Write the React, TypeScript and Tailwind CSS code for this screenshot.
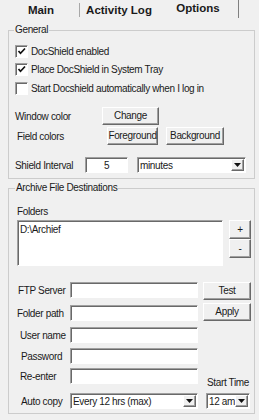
import React from 'react';

const raised =
  'bg-[#f0f0f0] border border-t-white border-l-white border-r-[#696969] border-b-[#696969] shadow-[inset_-1px_-1px_0_#a0a0a0]';
const sunken =
  'bg-white border border-t-[#a0a0a0] border-l-[#a0a0a0] border-r-white border-b-white shadow-[inset_1px_1px_0_#696969]';

function Btn({ children, className = '' }: { children: React.ReactNode; className?: string }) {
  return <button className={`${raised} flex items-center justify-center leading-none ${className}`}>{children}</button>;
}

function Check({ checked }: { checked?: boolean }) {
  return (
    <span className={`${sunken} w-[13px] h-[13px] flex items-center justify-center shrink-0`}>
      {checked && (
        <svg width="9" height="9" viewBox="0 0 9 9">
          <path d="M1.5 4 L3.5 6.3 L8 1.5" stroke="#111" strokeWidth="1.7" fill="none" />
        </svg>
      )}
    </span>
  );
}

function Combo({ value, className = '' }: { value: string; className?: string }) {
  return (
    <div className={`${sunken} flex items-center justify-between pl-[2px] pr-[1px] ${className}`}>
      <span>{value}</span>
      <span className={`${raised} w-[13px] h-[12px] flex items-center justify-center shrink-0`}>
        <svg width="7" height="4" viewBox="0 0 7 4">
          <path d="M0 0 H7 L3.5 4 Z" fill="#111" />
        </svg>
      </span>
    </div>
  );
}

function Field({ className = '' }: { className?: string }) {
  return <div className={`${sunken} w-[128px] h-[16px] shrink-0 ${className}`} />;
}

export default function App() {
  return (
    <div className="w-[259px] h-[420px] overflow-hidden whitespace-nowrap bg-[#f0f0f0] text-[#1a1a1a] text-[10px] leading-[13px] tracking-[-0.35px] font-['Liberation_Sans',Arial,sans-serif]">
      {/* Tabs */}
      <div className="flex h-[20px] font-bold text-[11.5px] tracking-normal">
        <div className="w-[79px] flex justify-center pt-[4px] pl-[3px]">Main</div>
        <div className="w-px h-[14px] mt-[3px] bg-[#a8a8a8]" />
        <div className="w-[78px] flex justify-center pt-[4px]">Activity Log</div>
        <div className="w-[80px] flex justify-center pt-[2px]">Options</div>
        <div className="w-px h-[18px] bg-[#808080]" />
      </div>

      {/* General */}
      <fieldset className="ml-[8px] mt-[4px] w-[247px] border border-[#cccccc] pb-[5px]">
        <legend className="ml-[5px] px-[1px] leading-[12px]">General</legend>
        <div className="flex flex-col pl-[6px]">
          <label className="mt-[6px] h-[18px] flex items-center gap-[3px]">
            <Check checked />
            <span>DocShield enabled</span>
          </label>
          <label className="h-[18px] flex items-center gap-[3px]">
            <Check checked />
            <span>Place DocShield in System Tray</span>
          </label>
          <label className="mt-[1px] h-[18px] flex items-center gap-[3px]">
            <Check />
            <span>Start Docshield automatically when I log in</span>
          </label>

          <div className="mt-[10px] flex items-center">
            <span className="w-[87px]">Window color</span>
            <Btn className="w-[57px] h-[18px]">Change</Btn>
          </div>
          <div className="mt-[2px] flex items-center">
            <span className="w-[92px] pl-[2px]">Field colors</span>
            <Btn className="w-[51px] h-[18px]">Foreground</Btn>
            <Btn className="ml-[8px] w-[58px] h-[18px]">Background</Btn>
          </div>
          <div className="mt-[12px] flex items-center">
            <span className="w-[70px]">Shield Interval</span>
            <div className={`${sunken} w-[43px] h-[16px] flex items-center justify-center`}>5</div>
            <Combo value="minutes" className="ml-[9px] w-[109px] h-[16px]" />
          </div>
        </div>
      </fieldset>

      {/* Archive File Destinations */}
      <fieldset className="ml-[8px] mt-[3px] w-[247px] border border-[#cccccc] pb-[4px]">
        <legend className="ml-[6px] px-[1px] leading-[12px]">Archive File Destinations</legend>
        <div className="flex flex-col">
          <span className="mt-[11px] pl-[8px]">Folders</span>
          <div className="mt-[2px] flex pl-[8px]">
            <div className={`${sunken} w-[206px] h-[46px] px-[2px] pt-[2px]`}>D:\Archief</div>
            <div className="ml-[6px] flex flex-col">
              <Btn className="w-[22px] h-[19px]">+</Btn>
              <Btn className="w-[22px] h-[19px]">-</Btn>
            </div>
          </div>

          <div className="mt-[16px] flex items-start">
            <span className="w-[61px] pl-[9px] h-[16px] flex items-center">FTP Server</span>
            <Field />
            <Btn className="ml-[5px] w-[48px] h-[18px]">Test</Btn>
          </div>
          <div className="mt-[3px] flex items-end">
            <span className="w-[61px] pl-[8px] h-[16px] flex items-center">Folder path</span>
            <Field />
            <Btn className="ml-[5px] w-[48px] h-[18px]">Apply</Btn>
          </div>
          <div className="mt-[6px] flex items-start">
            <span className="w-[61px] pl-[11px] h-[16px] flex items-center">User name</span>
            <Field />
          </div>
          <div className="mt-[5px] flex items-start">
            <span className="w-[61px] pl-[12px] h-[16px] flex items-center">Password</span>
            <Field />
          </div>
          <div className="mt-[4px] flex items-start">
            <span className="w-[61px] pl-[11px] h-[16px] flex items-center">Re-enter</span>
            <Field />
            <span className="ml-[9px] mt-[8px]">Start Time</span>
          </div>
          <div className="mt-[4px] flex items-center">
            <span className="w-[61px] pl-[12px]">Auto copy</span>
            <Combo value="Every 12 hrs (max)" className="w-[128px] h-[16px]" />
            <Combo value="12 am" className="ml-[8px] w-[44px] h-[16px]" />
          </div>
        </div>
      </fieldset>
    </div>
  );
}
